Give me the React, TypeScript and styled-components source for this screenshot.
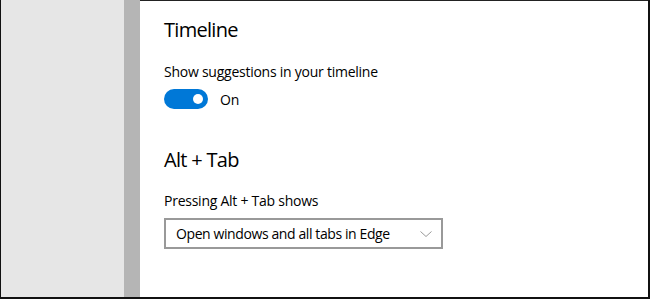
import React from "react";
import styled, { createGlobalStyle } from "styled-components";

const Global = createGlobalStyle`
  html, body { margin: 0; padding: 0; background: #ffffff; }
  body { font-family: "Open Sans", "Noto Sans", sans-serif; color: #000; }
`;

const Frame = styled.div`
  width: 650px;
  height: 299px;
  box-sizing: border-box;
  display: grid;
  grid-template-columns: 123px 16px 1fr;
  border-left: 1px solid #111;
  border-right: 2px solid #111;
  border-bottom: 2px solid #111;
  overflow: hidden;
`;

const Nav = styled.div`
  background: #e6e6e6;
  margin-left: -1px;
`;

const Divider = styled.div`
  background: #b5b5b5;
`;

const Content = styled.main`
  border-top: 1px solid #222;
  padding: 17px 0 0 24px;
  display: flex;
  flex-direction: column;
`;

const Heading = styled.h2<{ $top?: number }>`
  margin: ${(p) => p.$top ?? 0}px 0 0 0;
  font-size: 20px;
  font-weight: 400;
  line-height: 24px;
  letter-spacing: -0.7px;
`;

const Label = styled.div<{ $top: number }>`
  margin-top: ${(p) => p.$top}px;
  font-size: 14px;
  line-height: 20px;
  letter-spacing: -0.25px;
`;

const ToggleRow = styled.div`
  margin-top: 7px;
  display: flex;
  align-items: center;
  gap: 12px;
  height: 20px;
`;

const Track = styled.div`
  width: 44px;
  height: 20px;
  border-radius: 10px;
  background: #0078d7;
  display: flex;
  align-items: center;
  justify-content: flex-end;
  padding-right: 5px;
  box-sizing: border-box;
`;

const Knob = styled.div`
  width: 10px;
  height: 10px;
  border-radius: 50%;
  background: #ffffff;
`;

const ToggleText = styled.span`
  font-size: 14px;
  letter-spacing: -0.2px;
`;

const Select = styled.div`
  margin-top: 7px;
  width: 279px;
  height: 31px;
  box-sizing: border-box;
  border: 2px solid #999999;
  display: flex;
  align-items: center;
  justify-content: space-between;
  padding: 0 8px 0 10px;
`;

const SelectText = styled.span`
  font-size: 14px;
  letter-spacing: -0.4px;
`;

const Chevron = () => (
  <svg width="14" height="8" viewBox="0 0 14 8" fill="none">
    <path d="M1.5 1.5 L7 6.5 L12.5 1.5" stroke="#9a9a9a" strokeWidth="1" />
  </svg>
);

export default function App() {
  return (
    <>
      <Global />
      <Frame>
        <Nav />
        <Divider />
        <Content>
          <Heading>Timeline</Heading>
          <Label $top={20}>Show suggestions in your timeline</Label>
          <ToggleRow>
            <Track>
              <Knob />
            </Track>
            <ToggleText>On</ToggleText>
          </ToggleRow>
          <Heading $top={39}>Alt + Tab</Heading>
          <Label $top={19}>Pressing Alt + Tab shows</Label>
          <Select>
            <SelectText>Open windows and all tabs in Edge</SelectText>
            <Chevron />
          </Select>
        </Content>
      </Frame>
    </>
  );
}
